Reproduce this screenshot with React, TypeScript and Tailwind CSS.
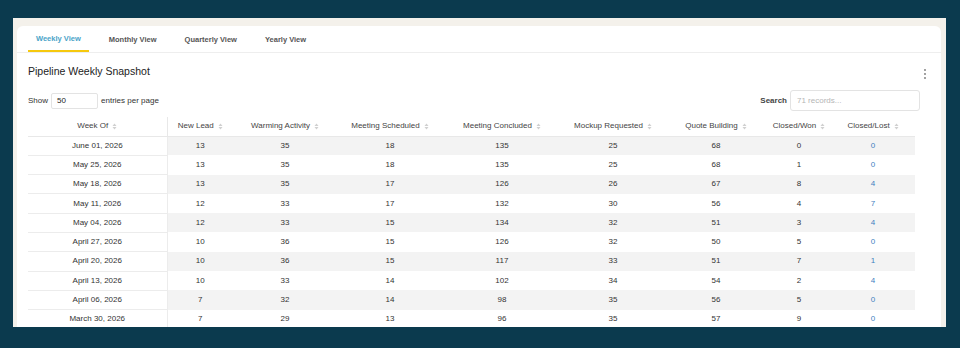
import React from "react";

const rows: [string, number, number, number, number, number, number, number, number][] = [
  ["June 01, 2026", 13, 35, 18, 135, 25, 68, 0, 0],
  ["May 25, 2026", 13, 35, 18, 135, 25, 68, 1, 0],
  ["May 18, 2026", 13, 35, 17, 126, 26, 67, 8, 4],
  ["May 11, 2026", 12, 33, 17, 132, 30, 56, 4, 7],
  ["May 04, 2026", 12, 33, 15, 134, 32, 51, 3, 4],
  ["April 27, 2026", 10, 36, 15, 126, 32, 50, 5, 0],
  ["April 20, 2026", 10, 36, 15, 117, 33, 51, 7, 1],
  ["April 13, 2026", 10, 33, 14, 102, 34, 54, 2, 4],
  ["April 06, 2026", 7, 32, 14, 98, 35, 56, 5, 0],
  ["March 30, 2026", 7, 29, 13, 96, 35, 57, 9, 0],
];

const headers = [
  "Week Of",
  "New Lead",
  "Warming Activity",
  "Meeting Scheduled",
  "Meeting Concluded",
  "Mockup Requested",
  "Quote Building",
  "Closed/Won",
  "Closed/Lost",
];

const widths = [139, 66, 104, 106, 118, 104, 102, 64, 84];

function SortIcon() {
  return (
    <svg width="5" height="7" viewBox="0 0 5 7" className="ml-[4px] inline-block">
      <path d="M2.5 0.5 L4.5 3 L0.5 3 Z" fill="#d0d0d0" />
      <path d="M2.5 6.5 L4.5 4 L0.5 4 Z" fill="#d0d0d0" />
    </svg>
  );
}

export default function App() {
  const font = { fontFamily: '"Liberation Sans", Arial, sans-serif' };
  return (
    <div className="w-[960px] h-[348px] bg-[#0b3a4e] pt-[18px] pl-[13px] overflow-hidden" style={font}>
      <div className="w-[933px] h-[309px] bg-[#f4f1eb] pl-[4px] pr-[5px] pt-[8px] overflow-hidden">
        <div className="bg-white rounded-t-[6px] h-full overflow-hidden">
          {/* Tabs */}
          <div className="flex items-end h-[27px] pl-[11px] gap-[12px] border-b border-[#eeeeee]">
            <div className="px-[8px] h-[27px] pt-[3px] flex items-center border-b-2 border-[#f6c90e] text-[#4aa3c8] text-[7.5px] font-bold">
              Weekly View
            </div>
            <div className="px-[8px] h-[27px] pt-[3px] flex items-center text-[#555555] text-[7.5px] font-bold">Monthly View</div>
            <div className="px-[8px] h-[27px] pt-[3px] flex items-center text-[#555555] text-[7.5px] font-bold">Quarterly View</div>
            <div className="px-[8px] h-[27px] pt-[3px] flex items-center text-[#555555] text-[7.5px] font-bold">Yearly View</div>
          </div>

          <div className="pl-[11px] pr-[15px]">
            {/* Title row */}
            <div className="flex items-center justify-between mt-[11px] h-[16px]">
              <div className="text-[10.5px] text-[#222222]">Pipeline Weekly Snapshot</div>
              <svg width="4" height="12" viewBox="0 0 4 12" className="mt-[4px] mr-[-1px]">
                <circle cx="2" cy="2" r="0.9" fill="#777777" />
                <circle cx="2" cy="6" r="0.9" fill="#777777" />
                <circle cx="2" cy="10" r="0.9" fill="#777777" />
              </svg>
            </div>

            {/* Show / Search row */}
            <div className="flex items-center justify-between mt-[9px] h-[23px] pr-[6px]">
              <div className="flex items-center text-[8px] text-[#333333]">
                <span>Show</span>
                <div className="ml-[3px] w-[47px] h-[16px] border border-[#e3e3e3] rounded-[2px] flex items-center pl-[5px] text-[#222222]">
                  50
                </div>
                <span className="ml-[3px]">entries per page</span>
              </div>
              <div className="flex items-center text-[8px] text-[#333333]">
                <span className="font-bold text-[#444444]">Search</span>
                <div className="ml-[3px] w-[130px] h-[21px] border border-[#e3e3e3] rounded-[3px] flex items-center pl-[6px] text-[#b5b5b5]">
                  71 records...
                </div>
              </div>
            </div>

            {/* Table */}
            <table className="mt-[5px] border-collapse table-fixed" style={{ width: 887 }}>
              <colgroup>
                {widths.map((w, i) => (
                  <col key={i} style={{ width: w }} />
                ))}
              </colgroup>
              <thead>
                <tr className="h-[19px]">
                  {headers.map((h, i) => (
                    <th
                      key={h}
                      className={
                        i === 0
                          ? "p-0 text-center font-normal text-[8px] text-[#444444] border-b border-r border-[#e8e8e8]"
                          : "p-0 text-center font-normal text-[8px] text-[#444444] border-b border-[#e8e8e8]"
                      }
                    >
                      <span className="inline-flex items-center">
                        {h}
                        <SortIcon />
                      </span>
                    </th>
                  ))}
                </tr>
              </thead>
              <tbody>
                {rows.map((r, ri) => (
                  <tr key={ri} className="h-[19.3px]">
                    {r.map((v, ci) => {
                      let cls = "p-0 text-center text-[8px] ";
                      if (ci === 0) cls += "bg-white border-r border-b border-[#ececec] text-[#333333]";
                      else {
                        cls += ri % 2 === 0 ? "bg-[#f3f3f3] " : "bg-white ";
                        cls += ci === 8 ? "text-[#3f7fbf]" : "text-[#333333]";
                      }
                      return (
                        <td key={ci} className={cls}>
                          {v}
                        </td>
                      );
                    })}
                  </tr>
                ))}
              </tbody>
            </table>
          </div>
        </div>
      </div>
    </div>
  );
}
